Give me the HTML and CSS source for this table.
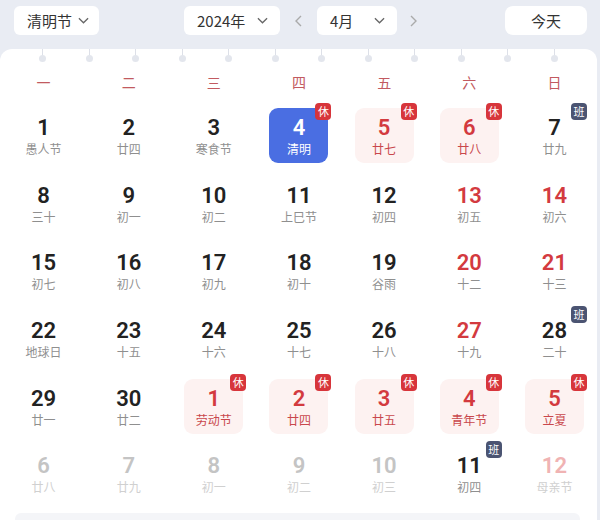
FILE: index.html
```html
<!DOCTYPE html>
<html lang="zh">
<head>
<meta charset="utf-8">
<link rel="stylesheet" href="styles.css">
</head>
<body>
<div class="toolbar">
  <div class="select sel-fest"><span>清明节</span><svg class="chev" viewBox="0 0 12 7"><path d="M1 1l5 5 5-5"/></svg></div>
  <div class="select sel-year"><span>2024年</span><svg class="chev" viewBox="0 0 12 7"><path d="M1 1l5 5 5-5"/></svg></div>
  <svg class="arrow" viewBox="0 0 7 12"><path d="M6 1L1 6l5 5"/></svg>
  <div class="select sel-month"><span>4月</span><svg class="chev" viewBox="0 0 12 7"><path d="M1 1l5 5 5-5"/></svg></div>
  <svg class="arrow" viewBox="0 0 7 12"><path d="M1 1l5 5-5 5"/></svg>
  <div class="today-btn">今天</div>
</div>
<div class="card">
  <div class="pins">
    <i class="pin"></i><i class="pin"></i><i class="pin"></i><i class="pin"></i><i class="pin"></i><i class="pin"></i>
    <i class="pin"></i><i class="pin"></i><i class="pin"></i><i class="pin"></i><i class="pin"></i><i class="pin"></i>
  </div>
  <div class="weekdays">
    <span>一</span><span>二</span><span>三</span><span>四</span><span>五</span><span>六</span><span>日</span>
  </div>
  <div class="grid">
    <div class="cell"><div class="day"><b>1</b><small>愚人节</small></div></div>
    <div class="cell"><div class="day"><b>2</b><small>廿四</small></div></div>
    <div class="cell"><div class="day"><b>3</b><small>寒食节</small></div></div>
    <div class="cell"><div class="day today"><b>4</b><small>清明</small><em class="tag rest">休</em></div></div>
    <div class="cell"><div class="day hol"><b>5</b><small>廿七</small><em class="tag rest">休</em></div></div>
    <div class="cell"><div class="day hol"><b>6</b><small>廿八</small><em class="tag rest">休</em></div></div>
    <div class="cell"><div class="day"><b>7</b><small>廿九</small><em class="tag work">班</em></div></div>

    <div class="cell"><div class="day"><b>8</b><small>三十</small></div></div>
    <div class="cell"><div class="day"><b>9</b><small>初一</small></div></div>
    <div class="cell"><div class="day"><b>10</b><small>初二</small></div></div>
    <div class="cell"><div class="day"><b>11</b><small>上巳节</small></div></div>
    <div class="cell"><div class="day"><b>12</b><small>初四</small></div></div>
    <div class="cell"><div class="day wkend"><b>13</b><small>初五</small></div></div>
    <div class="cell"><div class="day wkend"><b>14</b><small>初六</small></div></div>

    <div class="cell"><div class="day"><b>15</b><small>初七</small></div></div>
    <div class="cell"><div class="day"><b>16</b><small>初八</small></div></div>
    <div class="cell"><div class="day"><b>17</b><small>初九</small></div></div>
    <div class="cell"><div class="day"><b>18</b><small>初十</small></div></div>
    <div class="cell"><div class="day"><b>19</b><small>谷雨</small></div></div>
    <div class="cell"><div class="day wkend"><b>20</b><small>十二</small></div></div>
    <div class="cell"><div class="day wkend"><b>21</b><small>十三</small></div></div>

    <div class="cell"><div class="day"><b>22</b><small>地球日</small></div></div>
    <div class="cell"><div class="day"><b>23</b><small>十五</small></div></div>
    <div class="cell"><div class="day"><b>24</b><small>十六</small></div></div>
    <div class="cell"><div class="day"><b>25</b><small>十七</small></div></div>
    <div class="cell"><div class="day"><b>26</b><small>十八</small></div></div>
    <div class="cell"><div class="day wkend"><b>27</b><small>十九</small></div></div>
    <div class="cell"><div class="day"><b>28</b><small>二十</small><em class="tag work">班</em></div></div>

    <div class="cell"><div class="day"><b>29</b><small>廿一</small></div></div>
    <div class="cell"><div class="day"><b>30</b><small>廿二</small></div></div>
    <div class="cell"><div class="day hol"><b>1</b><small>劳动节</small><em class="tag rest">休</em></div></div>
    <div class="cell"><div class="day hol"><b>2</b><small>廿四</small><em class="tag rest">休</em></div></div>
    <div class="cell"><div class="day hol"><b>3</b><small>廿五</small><em class="tag rest">休</em></div></div>
    <div class="cell"><div class="day hol"><b>4</b><small>青年节</small><em class="tag rest">休</em></div></div>
    <div class="cell"><div class="day hol"><b>5</b><small>立夏</small><em class="tag rest">休</em></div></div>

    <div class="cell"><div class="day other"><b>6</b><small>廿八</small></div></div>
    <div class="cell"><div class="day other"><b>7</b><small>廿九</small></div></div>
    <div class="cell"><div class="day other"><b>8</b><small>初一</small></div></div>
    <div class="cell"><div class="day other"><b>9</b><small>初二</small></div></div>
    <div class="cell"><div class="day other"><b>10</b><small>初三</small></div></div>
    <div class="cell"><div class="day"><b>11</b><small>初四</small><em class="tag work">班</em></div></div>
    <div class="cell"><div class="day other otherwk"><b>12</b><small>母亲节</small></div></div>
  </div>
  <div class="footer-strip"></div>
</div>
</body>
</html>
```

FILE: styles.css
```css
* { box-sizing: border-box; }
html, body { margin: 0; padding: 0; }
body {
  width: 600px;
  height: 520px;
  overflow: hidden;
  background: #e9ecf3;
  font-family: "Noto Sans CJK SC", "Noto Sans", sans-serif;
  color: #222;
}
.toolbar {
  height: 49px;
  display: flex;
  align-items: flex-start;
  padding: 6px 0 0 14px;
}
.select {
  height: 29px;
  background: #fff;
  border-radius: 6px;
  display: flex;
  align-items: center;
  justify-content: space-between;
  font-size: 15px;
  color: #333;
}
.sel-fest { width: 85px; padding: 0 10px 0 13px; }
.sel-year { width: 96px; margin-left: 85px; padding: 0 12px 0 13px; }
.sel-month { width: 80px; padding: 0 12px 0 13px; }
.chev { width: 11px; height: 7px; fill: none; stroke: #666; stroke-width: 1.4; }
.arrow { width: 7px; height: 12px; fill: none; stroke: #aaa; stroke-width: 1.4; margin-top: 9px; }
.sel-year + .arrow { margin-left: 15px; margin-right: 15px; }
.sel-month + .arrow { margin-left: 13px; }
.today-btn {
  margin-left: 88px;
  width: 82px;
  height: 29px;
  background: #fff;
  border-radius: 8px;
  font-size: 15px;
  line-height: 29px;
  text-align: center;
  color: #333;
}
.card {
  position: relative;
  width: 597px;
  height: 471px;
  background: #fff;
  border-radius: 12px 12px 0 0;
}
.pins {
  display: flex;
  justify-content: space-between;
  padding: 0 39px;
  height: 13px;
}
.pin {
  position: relative;
  width: 7px;
  height: 13px;
}
.pin::before {
  content: "";
  position: absolute;
  left: 3px;
  top: 0;
  width: 1px;
  height: 7px;
  background: #dde0e8;
}
.pin::after {
  content: "";
  position: absolute;
  left: 0;
  top: 6px;
  width: 7px;
  height: 7px;
  border-radius: 50%;
  background: #e3e6ed;
}
.weekdays {
  display: grid;
  grid-template-columns: repeat(7, 1fr);
  padding-left: 1px;
  height: 40px;
  line-height: 40px;
  text-align: center;
  font-size: 14px;
  color: #c25a60;
}
.grid {
  display: grid;
  grid-template-columns: repeat(7, 1fr);
  grid-auto-rows: 67.6px;
  padding-left: 1px;
}
.cell {
  display: flex;
  align-items: center;
  justify-content: center;
}
.day {
  position: relative;
  width: 59px;
  height: 55px;
  border-radius: 9px;
  display: flex;
  flex-direction: column;
  align-items: center;
  padding-top: 7px;
}
.day b {
  font-family: "Roboto", "Noto Sans", sans-serif;
  font-weight: 600;
  font-size: 22px;
  line-height: 26px;
  color: #222;
}
.day small {
  font-size: 12px;
  line-height: 16px;
  margin-top: 0;
  color: #8f8f8f;
}
.day.wkend b { color: #d33a3f; }
.day.hol { background: #fdf2f1; }
.day.hol b { color: #d33a3f; }
.day.hol small { color: #c9474c; }
.day.today { background: #4a6ee2; }
.day.today b, .day.today small { color: #fff; }
.day.other b { color: #c4c4c4; }
.day.other small { color: #d0d0d0; }
.day.otherwk b { color: #f0b3b3; }
.tag {
  position: absolute;
  top: -5px;
  right: -3px;
  width: 16px;
  height: 17px;
  border-radius: 4px;
  font-style: normal;
  font-size: 11px;
  line-height: 17px;
  text-align: center;
  color: #fff;
}
.tag.rest { background: #d7353b; }
.tag.work { background: #4b5472; }
.footer-strip {
  position: absolute;
  left: 15px;
  right: 17px;
  bottom: 0;
  height: 7px;
  background: #f4f5f8;
  border-radius: 6px 6px 0 0;
}
```
